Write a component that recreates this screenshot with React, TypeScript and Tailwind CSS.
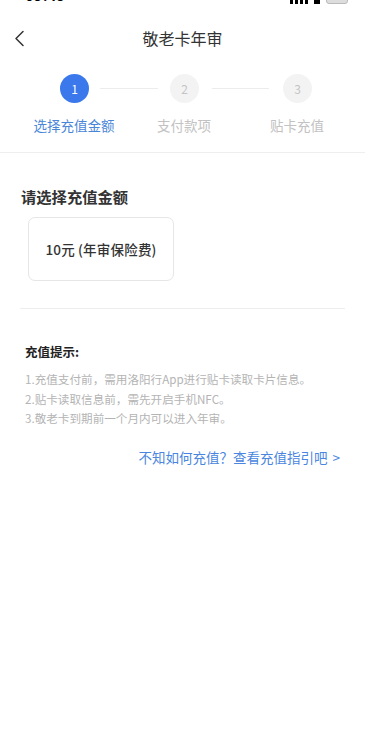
import React from 'react';

const font = { fontFamily: '"Noto Sans CJK SC", "Noto Sans", sans-serif' };

export default function App() {
  const steps = [
    { n: 1, label: '选择充值金额', w: 'w-[110px]', active: true },
    { n: 2, label: '支付款项', w: 'w-[110px]', active: false },
    { n: 3, label: '贴卡充值', w: 'w-[116px]', active: false },
  ];

  return (
    <div className="min-h-[739px] w-[365px] bg-white text-[#333]" style={font}>
      {/* status bar, cropped at top */}
      <div className="h-[16px] overflow-hidden">
        <div className="-mt-[14px] flex items-center justify-between pl-[25px] pr-[17px]">
          <span className="text-[15px] font-semibold leading-[18px] text-black">09:49</span>
          <div className="flex items-center gap-[6px]">
            <div className="flex items-end gap-[2px]">
              <div className="h-[18px] w-[3px] bg-black" />
              <div className="h-[18px] w-[3px] bg-black" />
              <div className="h-[18px] w-[3px] bg-black" />
              <div className="h-[18px] w-[3px] bg-black" />
            </div>
            <div className="h-[18px] w-[6px] bg-black" />
            <div className="h-[18px] w-[22px] rounded-[3px] border border-[#bbb] bg-[#ddd]" />
          </div>
        </div>
      </div>

      {/* nav */}
      <div className="relative flex h-[44px] items-center justify-center">
        <svg className="absolute left-[13px] top-[14px]" width="14" height="17" viewBox="0 0 14 17" fill="none">
          <polyline points="10,1.5 3,8.5 10,15.5" stroke="#333" strokeWidth="1.5" strokeLinecap="round" strokeLinejoin="round" />
        </svg>
        <span className="text-[16px] leading-[22px] text-[#333]">敬老卡年审</span>
      </div>

      {/* stepper */}
      <div className="border-b border-[#eeeeee] pb-[17px] pt-[14px]">
        <div className="flex items-center pl-[60px]">
          <div className="flex h-[29px] w-[29px] items-center justify-center rounded-full bg-[#3a78ec] text-[12px] text-white">1</div>
          <div className="ml-[11px] mr-[12px] h-px w-[58px] bg-[#ececec]" />
          <div className="flex h-[29px] w-[29px] items-center justify-center rounded-full bg-[#f3f3f3] text-[12px] text-[#c4c4c4]">2</div>
          <div className="ml-[13px] mr-[14px] h-px w-[57px] bg-[#ececec]" />
          <div className="flex h-[29px] w-[29px] items-center justify-center rounded-full bg-[#f3f3f3] text-[12px] text-[#c4c4c4]">3</div>
        </div>
        <div className="mt-[12px] flex pl-[19px]">
          {steps.map((s) => (
            <div
              key={s.n}
              className={`${s.w} text-center text-[13.5px] leading-[20px] ${s.active ? 'text-[#4a86d8]' : 'text-[#c2c2c2]'}`}
            >
              {s.label}
            </div>
          ))}
        </div>
      </div>

      {/* amount */}
      <div className="px-[21px] pt-[32px]">
        <div className="text-[15.3px] font-semibold leading-[22px] text-[#333]">请选择充值金额</div>
        <div className="ml-[7px] mt-[10px] flex h-[64px] w-[146px] items-center justify-center rounded-[7px] border border-[#e6e6e6]">
          <span className="text-[13.5px] font-medium tracking-[0.2px] text-[#333]">10元 (年审保险费)</span>
        </div>
      </div>
      <div className="mx-[20px] mt-[27px] h-px bg-[#eeeeee]" />

      {/* tips */}
      <div className="pl-[25px] pr-[25px] pt-[34px]">
        <div className="text-[12.5px] font-bold leading-[18px] text-[#222]">充值提示:</div>
        <div className="mt-[9px] text-[11.6px] leading-[19.5px] text-[#b4b4b4]">
          <div>1.充值支付前，需用洛阳行App进行贴卡读取卡片信息。</div>
          <div>2.贴卡读取信息前，需先开启手机NFC。</div>
          <div>3.敬老卡到期前一个月内可以进入年审。</div>
        </div>
        <div className="mt-[18px] flex justify-end pr-[0px] text-[13.5px] leading-[20px] text-[#4a86e0]">
          <span>不知如何充值？查看充值指引吧</span>
          <span className="ml-[5px]">&gt;</span>
        </div>
      </div>
    </div>
  );
}
